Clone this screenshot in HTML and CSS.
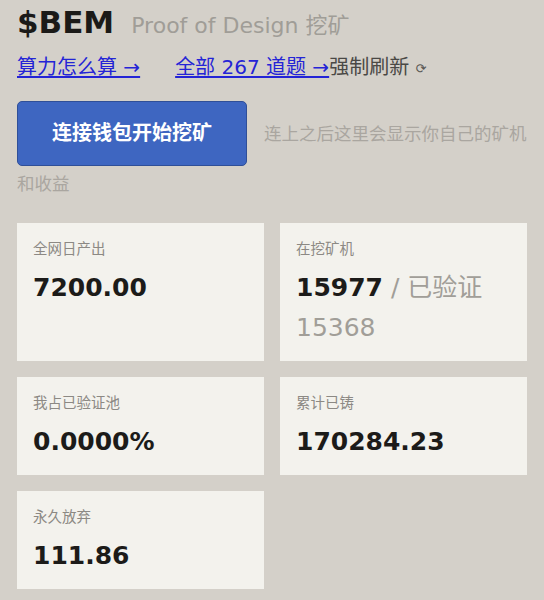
FILE: index.html
```html
<!DOCTYPE html>
<html lang="zh-CN">
<head>
<meta charset="utf-8">
<title>$BEM Proof of Design 挖矿</title>
<link rel="stylesheet" href="styles.css">
</head>
<body>
<header class="head">
  <h1 class="brand">$BEM</h1>
  <span class="tagline">Proof of Design 挖矿</span>
</header>
<nav class="links">
  <a class="link first" href="#">算力怎么算 →</a><a class="link" href="#">全部 267 道题 →</a><span class="refresh">强制刷新 <span class="refresh-icon">⟳</span></span>
</nav>
<section class="connect">
  <button class="btn" type="button">连接钱包开始挖矿</button><span class="hint">连上之后这里会显示你自己的矿机和收益</span>
</section>
<main class="grid">
  <div class="card">
    <div class="label">全网日产出</div>
    <div class="value">7200.00</div>
  </div>
  <div class="card">
    <div class="label">在挖矿机</div>
    <div class="value">15977<span class="muted"> / 已验证 15368</span></div>
  </div>
  <div class="card">
    <div class="label">我占已验证池</div>
    <div class="value">0.0000%</div>
  </div>
  <div class="card">
    <div class="label">累计已铸</div>
    <div class="value">170284.23</div>
  </div>
  <div class="card">
    <div class="label">永久放弃</div>
    <div class="value">111.86</div>
  </div>
</main>
</body>
</html>
```
FILE: styles.css
```css
html, body {
  margin: 0;
  padding: 0;
}
body {
  background: #d4d0c9;
  font-family: "DejaVu Sans", "Noto Sans CJK SC", sans-serif;
  color: #1c1b19;
  padding: 0 17px;
  width: 510px;
}
.head {
  display: flex;
  align-items: baseline;
  gap: 17px;
  padding-top: 4px;
  height: 36px;
}
.brand {
  margin: 0;
  font-size: 31px;
  line-height: 36px;
  font-weight: bold;
  color: #1b1a18;
}
.tagline {
  font-size: 22px;
  line-height: 36px;
  color: #a09d97;
}
.links {
  margin-top: 13px;
  font-size: 20px;
  line-height: 28px;
}
.link {
  color: #2424d6;
  text-decoration: underline;
  text-underline-offset: 2px;
}
.link.first {
  margin-right: 35px;
}
.refresh {
  color: #4a4845;
}
.refresh-icon {
  font-size: 13px;
  color: #5a5854;
  position: relative;
  top: -1px;
}
.connect {
  margin-top: 17px;
  font-size: 17.5px;
  line-height: 28px;
}
.btn {
  display: inline-block;
  margin: 0 17px 4px 0;
  padding: 18px 34px;
  font-family: "DejaVu Sans", "Noto Sans CJK SC", sans-serif;
  font-size: 20px;
  line-height: 27px;
  font-weight: bold;
  color: #ffffff;
  background: #3e66c1;
  border: 1px solid #2f4f98;
  border-radius: 5px;
  width: 230px;
  vertical-align: baseline;
}
.hint {
  color: #aaa6a0;
}
.grid {
  margin-top: 25px;
  display: grid;
  grid-template-columns: 1fr 1fr;
  gap: 16px;
}
.card {
  background: #f3f2ed;
  padding: 16px 16px 13px;
}
.label {
  font-size: 14.5px;
  line-height: 21px;
  color: #8c8984;
}
.value {
  margin-top: 8px;
  font-size: 25px;
  line-height: 40px;
  font-weight: bold;
  color: #1c1b19;
}
.muted {
  font-weight: normal;
  color: #a19e98;
}
```
